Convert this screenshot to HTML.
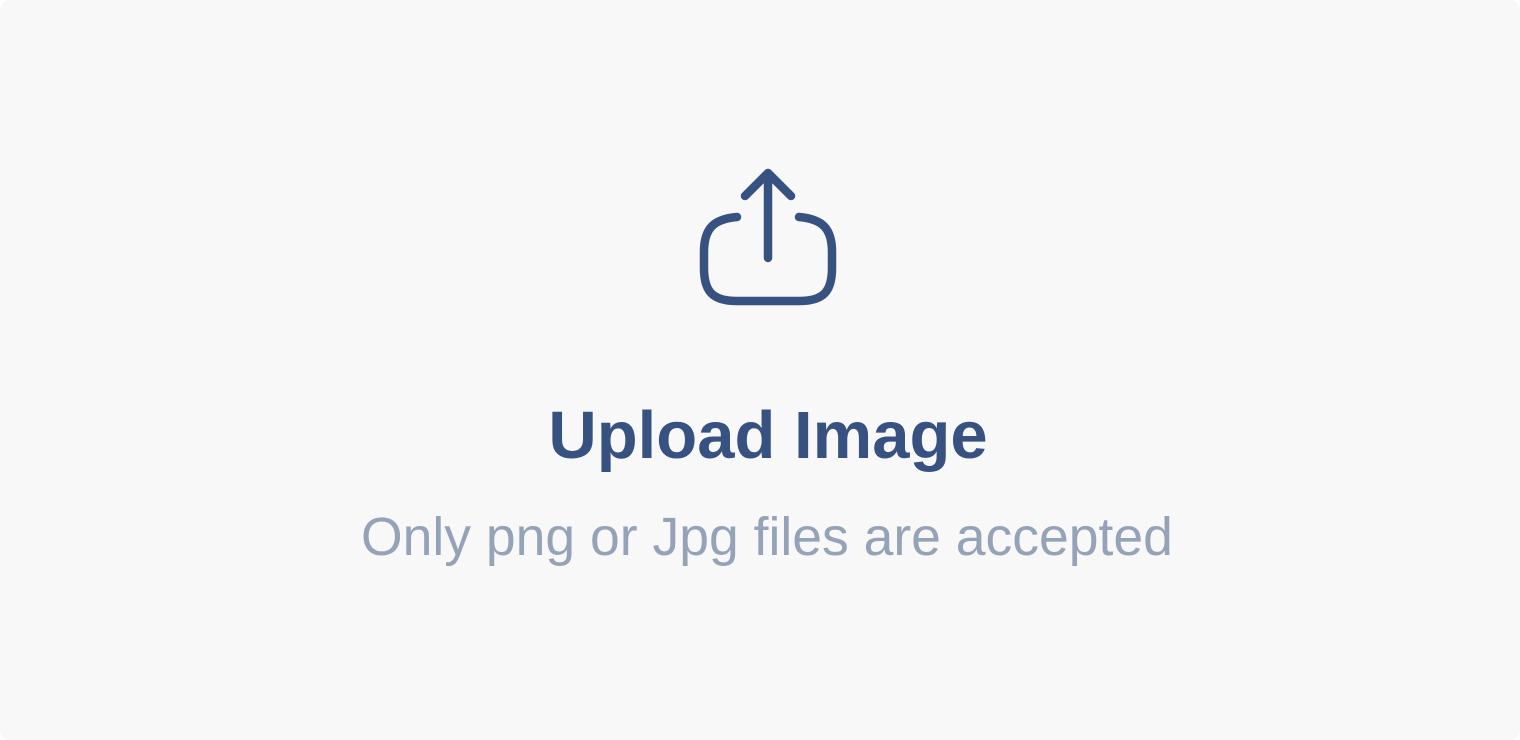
<!DOCTYPE html>
<html><head><style>
html,body{margin:0;padding:0;width:1520px;height:740px;background:#fff;overflow:hidden}
.card{position:absolute;left:0;top:0;width:1520px;height:740px;background:#f8f8f8;border-radius:10px}
.t{position:absolute;left:8px;width:1520px;text-align:center;font-family:"Liberation Sans",sans-serif;white-space:nowrap}
.h{top:397px;font-size:67px;font-weight:bold;color:#375280;letter-spacing:0px}
.s{top:507px;font-size:53.5px;color:#94a3b8;letter-spacing:0px;left:7px}
</style></head><body>
<div class="card"></div>
<svg style="position:absolute;left:0;top:0" width="1520" height="740">
<g fill="none" stroke="#375280" stroke-width="8.5" stroke-linecap="round" stroke-linejoin="round">
<path d="M768 258 V174 M745 196 L768 173 L791 196"/>
<path d="M737 217 C714 219 704 228 704 252 V268 C704 292 713 301 737 301 H799 C823 301 832 292 832 268 V252 C832 228 822 219 799 217"/>
</g></svg>
<div class="t h">Upload Image</div>
<div class="t s">Only png or Jpg files are accepted</div>
</body></html>
